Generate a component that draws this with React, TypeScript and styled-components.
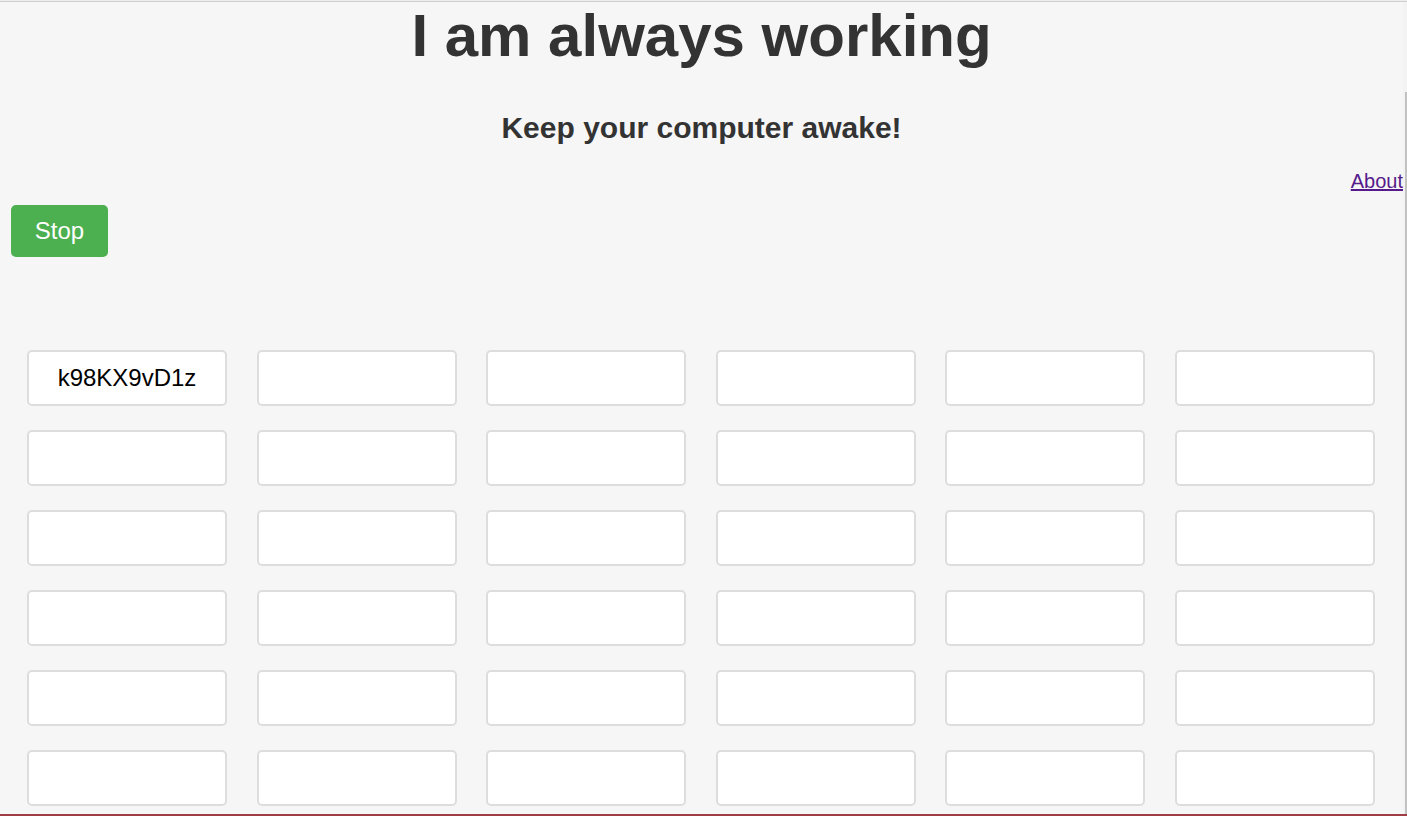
import React from "react";
import styled, { createGlobalStyle } from "styled-components";

const GlobalStyle = createGlobalStyle`
  html, body {
    margin: 0;
    padding: 0;
    background: #f6f6f6;
    overflow: hidden;
  }
  body {
    font-family: "Liberation Sans", Arial, sans-serif;
  }
`;

const Frame = styled.div`
  height: 816px;
  display: flex;
  flex-direction: column;
  overflow: hidden;
  background: #f6f6f6;
`;

const TopRule = styled.div`
  flex: none;
  height: 2px;
  background: linear-gradient(#ededed 50%, #cfcfcf 50%);
`;

const BottomRule = styled.div`
  flex: none;
  height: 2px;
  background: #9e3d44;
`;

const Body = styled.div`
  flex: 1;
  min-height: 0;
  display: flex;
  overflow: hidden;
`;

const Main = styled.main`
  width: 1403px;
  flex: none;
  display: flex;
  flex-direction: column;
`;

const ScrollTrack = styled.div`
  flex: 1;
  display: flex;
  flex-direction: column;
  background: #f3f3f3;
  padding-top: 90px;
  padding-left: 2px;
`;

const ScrollThumb = styled.div`
  flex: 1;
  width: 2px;
  background: #c2c2c2;
`;

const Title = styled.h1`
  margin: 4px 0 0;
  font-size: 60px;
  line-height: 60px;
  font-weight: 700;
  color: #333333;
  text-align: center;
`;

const Subtitle = styled.h2`
  margin: 47px 0 0;
  font-size: 30px;
  line-height: 30px;
  font-weight: 700;
  color: #333333;
  text-align: center;
`;

const NavRow = styled.nav`
  margin-top: 28px;
  display: flex;
  justify-content: flex-end;
`;

const AboutLink = styled.a`
  font-size: 20px;
  line-height: 20px;
  color: #551a8b;
  text-decoration: underline;
`;

const Controls = styled.div`
  margin-top: 14px;
  padding-left: 11px;
  display: flex;
`;

const StopButton = styled.button`
  width: 97px;
  height: 52px;
  border: none;
  border-radius: 5px;
  background: #4caf50;
  color: #ffffff;
  font-family: "Liberation Sans", Arial, sans-serif;
  font-size: 24px;
  cursor: pointer;
  padding: 0;
`;

const Grid = styled.div`
  margin-top: 93px;
  padding: 0 28px 0 27px;
  display: grid;
  grid-template-columns: repeat(6, 200px);
  justify-content: space-between;
  row-gap: 24px;
`;

const Cell = styled.input`
  box-sizing: border-box;
  width: 200px;
  height: 56px;
  border: 2px solid #dddddd;
  border-radius: 5px;
  background: #ffffff;
  font-family: "Liberation Sans", Arial, sans-serif;
  font-size: 24px;
  color: #000000;
  text-align: center;
  padding: 0;
  outline: none;
`;

const values: string[] = Array.from({ length: 48 }, (_, i) => (i === 0 ? "k98KX9vD1z" : ""));

export default function App() {
  return (
    <>
      <GlobalStyle />
      <Frame>
        <TopRule />
        <Body>
          <Main>
            <Title>I am always working</Title>
            <Subtitle>Keep your computer awake!</Subtitle>
            <NavRow>
              <AboutLink href="#about">About</AboutLink>
            </NavRow>
            <Controls>
              <StopButton type="button">Stop</StopButton>
            </Controls>
            <Grid>
              {values.map((v, i) => (
                <Cell key={i} type="text" defaultValue={v} readOnly />
              ))}
            </Grid>
          </Main>
          <ScrollTrack>
            <ScrollThumb />
          </ScrollTrack>
        </Body>
        <BottomRule />
      </Frame>
    </>
  );
}
